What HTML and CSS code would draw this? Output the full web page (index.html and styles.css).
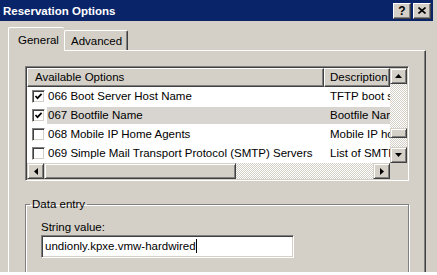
FILE: index.html
```html
<!DOCTYPE html>
<html lang="en">
<head>
<meta charset="UTF-8">
<title>Reservation Options</title>
<link rel="stylesheet" href="styles.css">
</head>
<body>
    <div class="dialog">
        <div class="titlebar">
            <span class="title">Reservation Options</span>
            <div class="caption-btns">
                <span class="cap-btn help">?</span>
                <span class="cap-btn">
                    <svg width="8" height="7" viewBox="0 0 8 7"><path d="M0.5 0.5 L7.5 6.5 M7.5 0.5 L0.5 6.5" stroke="#000" stroke-width="1.6"/></svg>
                </span>
            </div>
        </div>

        <div class="tabs">
            <div class="tab active">General</div>
            <div class="tab">Advanced</div>
        </div>

        <div class="panel">
            <div class="listview">
                <div class="list">
                    <div class="lv-header">
                        <div class="col-name">Available Options</div>
                        <div class="col-desc">Description</div>
                    </div>
                    <div class="lv-row">
                        <span class="check on"><svg width="9" height="9" viewBox="0 0 9 9"><polyline points="1.5,4 3.5,6.2 7.6,1.8" fill="none" stroke="#000" stroke-width="1.7"/></svg></span>
                        <div class="cells">
                            <div class="cell-name">066 Boot Server Host Name</div>
                            <div class="cell-desc">TFTP boot server host name</div>
                        </div>
                    </div>
                    <div class="lv-row">
                        <span class="check on"><svg width="9" height="9" viewBox="0 0 9 9"><polyline points="1.5,4 3.5,6.2 7.6,1.8" fill="none" stroke="#000" stroke-width="1.7"/></svg></span>
                        <div class="cells selected">
                            <div class="cell-name">067 Bootfile Name</div>
                            <div class="cell-desc">Bootfile Name</div>
                        </div>
                    </div>
                    <div class="lv-row">
                        <span class="check"></span>
                        <div class="cells">
                            <div class="cell-name">068 Mobile IP Home Agents</div>
                            <div class="cell-desc">Mobile IP home agents in priority order</div>
                        </div>
                    </div>
                    <div class="lv-row">
                        <span class="check"></span>
                        <div class="cells">
                            <div class="cell-name">069 Simple Mail Transport Protocol (SMTP) Servers</div>
                            <div class="cell-desc">List of SMTP servers available to the client</div>
                        </div>
                    </div>
                </div>

                <div class="vscroll">
                    <span class="sb-btn"><svg width="7" height="4" viewBox="0 0 7 4"><polygon points="3.5,0 7,4 0,4" fill="#000"/></svg></span>
                    <div class="sb-track v-top"></div>
                    <span class="sb-thumb v-thumb"></span>
                    <div class="sb-track v-bottom"></div>
                    <span class="sb-btn"><svg width="7" height="4" viewBox="0 0 7 4"><polygon points="0,0 7,0 3.5,4" fill="#000"/></svg></span>
                </div>

                <div class="hscroll">
                    <span class="sb-btn"><svg width="4" height="7" viewBox="0 0 4 7"><polygon points="4,0 4,7 0,3.5" fill="#000"/></svg></span>
                    <span class="sb-thumb h-thumb"></span>
                    <div class="sb-track"></div>
                    <span class="sb-btn"><svg width="4" height="7" viewBox="0 0 4 7"><polygon points="0,0 4,3.5 0,7" fill="#000"/></svg></span>
                </div>

                <div class="corner"></div>
            </div>

            <fieldset class="group">
                <legend>Data entry</legend>
                <label class="field-label" for="strval">String value:</label>
                <div class="textbox" id="strval">undionly.kpxe.vmw-hardwired<span class="caret"></span></div>
            </fieldset>
        </div>
    </div>
</body>
</html>
```

FILE: styles.css
```css
body {
    margin: 0;
    background: #ffffff;
    font-family: "Liberation Sans", Arial, sans-serif;
    font-size: 11.5px;
    color: #000000;
}

.dialog {
    width: 437px;
    height: 272px;
    background: #d4d0c8;
    overflow: hidden;
}

/* title bar */
.titlebar {
    width: 433px;
    height: 21px;
    background: #0a246a;
    display: flex;
    align-items: center;
    justify-content: space-between;
    box-sizing: border-box;
    padding: 0 2px 0 3px;
}

.title {
    color: #ffffff;
    font-weight: bold;
    font-size: 11.5px;
}

.caption-btns {
    display: flex;
    gap: 2px;
}

.cap-btn {
    width: 18px;
    height: 16px;
    box-sizing: border-box;
    background: #d4d0c8;
    border: 1px solid;
    border-color: #ffffff #404040 #404040 #ffffff;
    box-shadow: inset -1px -1px #808080;
    display: flex;
    align-items: center;
    justify-content: center;
}

.cap-btn.help {
    font-weight: bold;
    font-size: 12px;
    line-height: 1;
}

/* tabs */
.tabs {
    display: flex;
    align-items: flex-end;
    padding: 6px 0 0 8px;
    position: relative;
    z-index: 1;
}

.tab {
    width: 64px;
    height: 20px;
    box-sizing: border-box;
    padding: 2px 0 0 6px;
    border: 1px solid;
    border-color: #ffffff #404040 transparent #ffffff;
    border-bottom: none;
    border-radius: 2px 2px 0 0;
    box-shadow: inset -1px 0 #808080;
    line-height: 16px;
    background: #d4d0c8;
}

.tab.active {
    width: 56px;
    height: 24px;
    padding: 4px 0 0 9px;
    margin-bottom: -1px;
    border-right: none;
    box-shadow: none;
}

/* tab page */
.panel {
    margin-left: 8px;
    width: 418px;
    height: 230px;
    box-sizing: border-box;
    border-top: 1px solid #ffffff;
    border-left: 1px solid #ffffff;
    border-right: 1px solid #404040;
    box-shadow: inset -1px 0 #808080;
    padding: 15px 16px 0 16px;
}

/* list view */
.listview {
    width: 384px;
    height: 115px;
    box-sizing: border-box;
    border: 1px solid;
    border-color: #808080 #ffffff #ffffff #808080;
    box-shadow: inset 1px 1px #404040, inset -1px -1px #d4d0c8;
    padding: 1px;
    background: #ffffff;
    display: grid;
    grid-template-columns: 1fr 17px;
    grid-template-rows: 95px 16px;
}

.list {
    overflow: hidden;
    white-space: nowrap;
}

.lv-header {
    display: flex;
    height: 19px;
}

.lv-header > div {
    box-sizing: border-box;
    background: #d4d0c8;
    border: 1px solid;
    border-color: #ffffff #404040 #404040 #ffffff;
    box-shadow: inset -1px -1px #808080;
    line-height: 17px;
}

.lv-header .col-name {
    width: 297px;
    flex: none;
    padding-left: 7px;
}

.lv-header .col-desc {
    flex: 1;
    padding-left: 5px;
    overflow: hidden;
}

.lv-row {
    display: flex;
    align-items: center;
    height: 19px;
}

.check {
    flex: none;
    width: 13px;
    height: 13px;
    box-sizing: border-box;
    margin: 0 2px 0 5px;
    background: #ffffff;
    border: 1px solid;
    border-color: #808080 #ffffff #ffffff #808080;
    box-shadow: inset 1px 1px #404040, inset -1px -1px #d4d0c8;
    display: flex;
    align-items: center;
    justify-content: center;
}

.cells {
    flex: 1;
    display: flex;
    height: 17px;
    line-height: 17px;
    overflow: hidden;
}

.cells.selected {
    background: #d8d5d0;
}

.cell-name {
    width: 277px;
    flex: none;
    padding-left: 1px;
    box-sizing: border-box;
    overflow: hidden;
}

.cell-desc {
    padding-left: 6px;
}

/* scroll bars */
.vscroll {
    display: flex;
    flex-direction: column;
}

.hscroll {
    display: flex;
}

.sb-btn {
    flex: none;
    width: 17px;
    height: 16px;
    box-sizing: border-box;
    background: #d4d0c8;
    border: 1px solid;
    border-color: #d4d0c8 #404040 #404040 #d4d0c8;
    box-shadow: inset 1px 1px #ffffff, inset -1px -1px #808080;
    display: flex;
    align-items: center;
    justify-content: center;
}

.sb-track {
    flex: 1;
    background: repeating-conic-gradient(#ffffff 0 25%, #d4d0c8 0 50%) 0 0 / 2px 2px;
}

.sb-thumb {
    flex: none;
    box-sizing: border-box;
    background: #d4d0c8;
    border: 1px solid;
    border-color: #d4d0c8 #404040 #404040 #d4d0c8;
    box-shadow: inset 1px 1px #ffffff, inset -1px -1px #808080;
}

.v-thumb {
    height: 10px;
}

.v-top {
    flex: 5;
}

.v-bottom {
    flex: 1;
}

.h-thumb {
    width: 192px;
}

.corner {
    background: #d4d0c8;
}

/* group box */
.group {
    margin: 16px 0 0 0;
    width: 384px;
    height: 120px;
    box-sizing: border-box;
    padding: 9px 15px 0 15px;
    border: 1px solid #808080;
    box-shadow: inset 1px 1px #ffffff, 1px 1px #ffffff;
}

.group legend {
    padding: 0 2px;
    margin-left: -11px;
    line-height: 14px;
}

.field-label {
    display: block;
    line-height: 14px;
    margin-bottom: 1px;
}

.textbox {
    width: 253px;
    height: 23px;
    box-sizing: border-box;
    background: #ffffff;
    border: 1px solid;
    border-color: #808080 #ffffff #ffffff #808080;
    box-shadow: inset 1px 1px #404040, inset -1px -1px #d4d0c8;
    padding: 0 3px;
    line-height: 21px;
    white-space: nowrap;
}

.caret {
    display: inline-block;
    width: 1px;
    height: 14px;
    background: #000000;
    vertical-align: -3px;
}
```
